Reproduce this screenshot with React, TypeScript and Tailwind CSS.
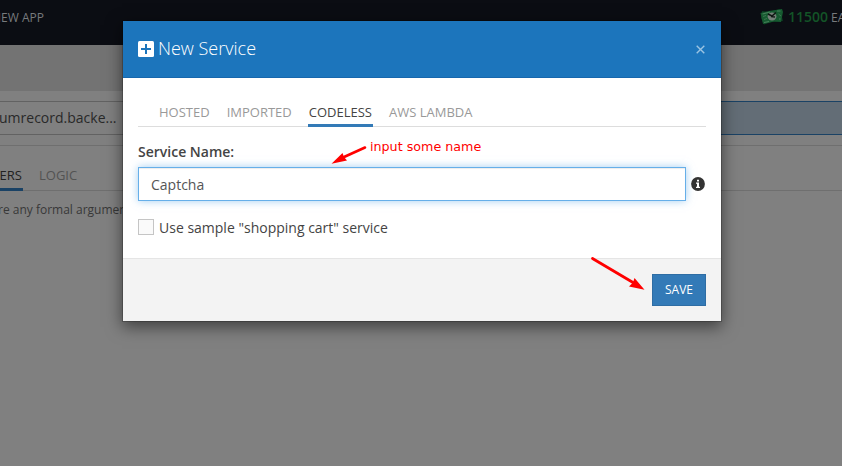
import React from "react";

function Money() {
  return (
    <svg width="24" height="17" viewBox="0 0 24 17" className="shrink-0">
      <path d="M2 3 L9 4 L20 1 L23 13 L12 14 L4 16.500 L1 10Z" fill="#0c3a20" />
      <path d="M0.500 5 L9 3 L22 1 L23 4 L21 14 L14 13.500 L3 16Z" fill="#165a30" />
      <path d="M2.500 6 L10 4 M4 14.500 L9 13.500 M17 3 L20.500 3 M19 11 L20.500 11" stroke="#47805a" strokeWidth="1.2" />
      <path d="M3 8.500 L6 7.500 M4 11.500 L7 10.500 M18.500 6 L21 8" stroke="#3c7650" />
      <ellipse cx="12" cy="8.500" rx="4.400" ry="4" fill="#748078" />
      <path d="M8 6 L12 8 L16 4.500 M11 8.500 L15 9" stroke="#101713" strokeWidth="1.5" fill="none" />
    </svg>
  );
}

function Page() {
  return (
    <div className="h-full bg-[#808080]">
      <header className="flex h-[45px] items-start justify-between bg-[#0b0d13] text-[12px] leading-[17px] text-[#777a7d]">
        <span className="-ml-[8px] pt-[9px]">NEW APP</span>
        <div className="flex w-[82px] items-start whitespace-nowrap pt-[8px]">
          <Money />
          <span className="ml-[4px] w-[43px] shrink-0 text-[14px] font-semibold leading-[18px] text-[#135427]">11500</span>
          <span className="pt-px">EARN</span>
        </div>
      </header>
      <div className="h-[46px] bg-[#737373]" />
      <div className="flex h-[55px] items-start border-b border-[#6f6f6f] pt-[10px]">
        <div className="h-[34px] w-[400px] border-y border-[#626262] text-[14px] leading-[32px] text-[#292929]">
          <span className="-ml-px">umrecord.backe...</span>
        </div>
        <div className="h-[34px] grow border-y border-[#1a4265] bg-[#636d76]" />
      </div>
      <nav className="flex h-[45px] items-end gap-[16px] border-b border-[#6f6f6f] text-[13px] leading-[18px]">
        <div className="-mb-px flex w-[23px] justify-end border-b-[3px] border-[#1a4265] pb-[4px] pr-px text-[#222]">PARAMETERS</div>
        <div className="pb-[6px] text-[#535353]">LOGIC</div>
      </nav>
      <p className="-ml-[2px] pt-[10px] text-[12px] leading-[18px] text-[#383838]">re any formal arguments</p>
    </div>
  );
}

function Modal() {
  return (
    <section className="absolute left-[122px] top-[20px] w-[600px] border border-black/20 bg-white bg-clip-padding shadow-[0_5px_15px_rgba(0,0,0,0.5)]">
      <header className="flex h-[57px] items-center justify-between border-b border-[#1767ad] bg-[#1c75bc] px-[15px] text-white">
        <h1 className="flex items-center gap-[4px] pb-[2px] text-[18px] font-light">
          <svg width="16" height="16" viewBox="0 0 16 16" className="mt-px">
            <rect width="16" height="16" rx="1.5" fill="white" />
            <path d="M8 3V13M3 8H13" stroke="#1c75bc" strokeWidth="2" />
          </svg>
          New Service
        </h1>
        <svg width="9" height="9" viewBox="0 0 9 9" className="mr-[1px]">
          <path d="M.7.7L8.300 8.300M8.300.7L.7 8.300" stroke="#9bc4e3" strokeWidth="1.4" />
        </svg>
      </header>
      <div className="h-[180px] px-[15px] pt-[20px] text-[14px] text-[#444]">
        <nav className="flex h-[29px] items-end gap-[15px] border-b border-[#ddd] pl-[20px] text-[13px] leading-[18px] text-[#999]">
          <span className="px-px pb-[5px]">HOSTED</span>
          <span className="px-px pb-[5px]">IMPORTED</span>
          <span className="-mb-px border-b-[3px] border-[#337ab7] px-px pb-[3px] text-[#444]">CODELESS</span>
          <span className="px-px pb-[5px]">AWS LAMBDA</span>
        </nav>
        <label className="mt-[15px] block text-[14px] font-semibold leading-[20px] text-[#444]">Service Name:</label>
        <div className="mt-[5px] flex items-center gap-[5px]">
          <div className="h-[34px] w-[548px] border border-[#66afe9] px-[12px] leading-[33px] text-[#555] shadow-[inset_0_1px_1px_rgba(0,0,0,0.075),0_0_8px_rgba(102,175,233,0.6)]">Captcha</div>
          <svg width="14" height="14" viewBox="0 0 14 14">
            <circle cx="7" cy="7" r="6.900" fill="#333" />
            <path d="M6 2.700H8V4.600H6ZM5 5.500H8V9.700H9V11H5V9.700H6V6.800H5Z" fill="white" />
          </svg>
        </div>
        <div className="mt-[16px] flex h-[20px] items-center gap-[5px]">
          <span className="h-[16px] w-[16px] border border-[#c5c5c5] bg-[#fafafa]" />
          <span>Use sample "shopping cart" service</span>
        </div>
      </div>
      <footer className="flex h-[63px] justify-end border-t border-[#e5e5e5] bg-[#f3f3f3] px-[15px] pt-[15px]">
        <button className="h-[32px] w-[54px] border border-[#2e6da4] bg-[#337ab7] text-[12px] text-white">SAVE</button>
      </footer>
    </section>
  );
}

function Notes() {
  return (
    <>
      <svg className="absolute left-0 top-0" width="842" height="466" fill="red" stroke="red">
        <path d="M365 147.500L344 157" strokeWidth="2.600" strokeLinecap="round" />
        <path d="M331.500 163.800L342.500 153L344 157L347 160.500Z" stroke="none" />
        <path d="M592.500 258.500L633 282.500" strokeWidth="2.800" strokeLinecap="round" />
        <path d="M644.500 289.800L634.500 278L633 282.500L629 286.500Z" stroke="none" />
      </svg>
      <span className="absolute left-[370px] top-[139px] whitespace-nowrap font-['DejaVu_Sans',sans-serif] text-[12.700px] leading-[16px] text-[#ff0000]">input some name</span>
    </>
  );
}

export default function App() {
  return (
    <main className="relative h-[466px] w-[842px] overflow-hidden font-['Open_Sans',sans-serif]">
      <Page />
      <Modal />
      <Notes />
    </main>
  );
}
